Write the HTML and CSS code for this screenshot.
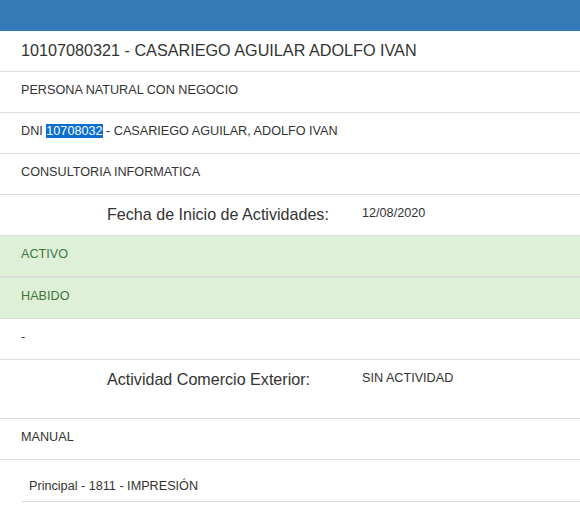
FILE: index.html
```html
<!DOCTYPE html>
<html lang="es">
<head>
    <meta charset="UTF-8">
    <meta name="viewport" content="width=device-width, initial-scale=1.0">
    <title>Consulta RUC</title>
    <link rel="stylesheet" href="styles.css">
</head>
<body>
    <div class="top-bar"></div>

    <div class="list-group">
        <div class="list-item list-title">10107080321 - CASARIEGO AGUILAR ADOLFO IVAN</div>
        <div class="list-item">PERSONA NATURAL CON NEGOCIO</div>
        <div class="list-item">DNI <span class="selected">10708032</span> - CASARIEGO AGUILAR, ADOLFO IVAN</div>
        <div class="list-item">CONSULTORIA INFORMATICA</div>
        <div class="list-item list-pair">
            <span class="pair-label">Fecha de Inicio de Actividades:</span>
            <span class="pair-value">12/08/2020</span>
        </div>
        <div class="list-item item-success item-split">ACTIVO</div>
        <div class="list-item item-success">HABIDO</div>
        <div class="list-item">-</div>
        <div class="list-item list-pair list-pair-tall">
            <span class="pair-label">Actividad Comercio Exterior:</span>
            <span class="pair-value">SIN ACTIVIDAD</span>
        </div>
        <div class="list-item">MANUAL</div>
        <div class="activity-table">
            <div class="activity-row">Principal - 1811 - IMPRESIÓN</div>
        </div>
    </div>
</body>
</html>
```

FILE: styles.css
```css
*, *::before, *::after {
    box-sizing: border-box;
    margin: 0;
    padding: 0;
}
body {
    font-family: "Liberation Sans", Arial, Helvetica, sans-serif;
    font-size: 12.65px;
    line-height: 20px;
    color: #333;
    background-color: #fff;
}
.top-bar {
    height: 31px;
    background-color: #337ab7;
}
.list-item {
    height: 41px;
    padding: 8px 15px 0 21px;
    border-bottom: 1px solid #ddd;
}
.list-title {
    font-size: 16.2px;
    padding-top: 9px;
}
.selected {
    background-color: #0a6fd0;
    color: #fff;
}
.item-success {
    background-color: #dff0d8;
    color: #3c763d;
}
.item-split {
    height: 42px;
    border-bottom-width: 2px;
}
.list-pair {
    display: grid;
    grid-template-columns: 341px 1fr;
    align-items: start;
    padding-top: 8px;
}
.list-pair-tall {
    height: 59px;
}
.pair-label {
    padding-left: 86px;
    padding-top: 1px;
    font-size: 16.1px;
}
.activity-table {
    margin-left: 22px;
}
.activity-row {
    height: 42px;
    padding: 16px 0 0 7px;
    border-bottom: 1px solid #ddd;
}
```
